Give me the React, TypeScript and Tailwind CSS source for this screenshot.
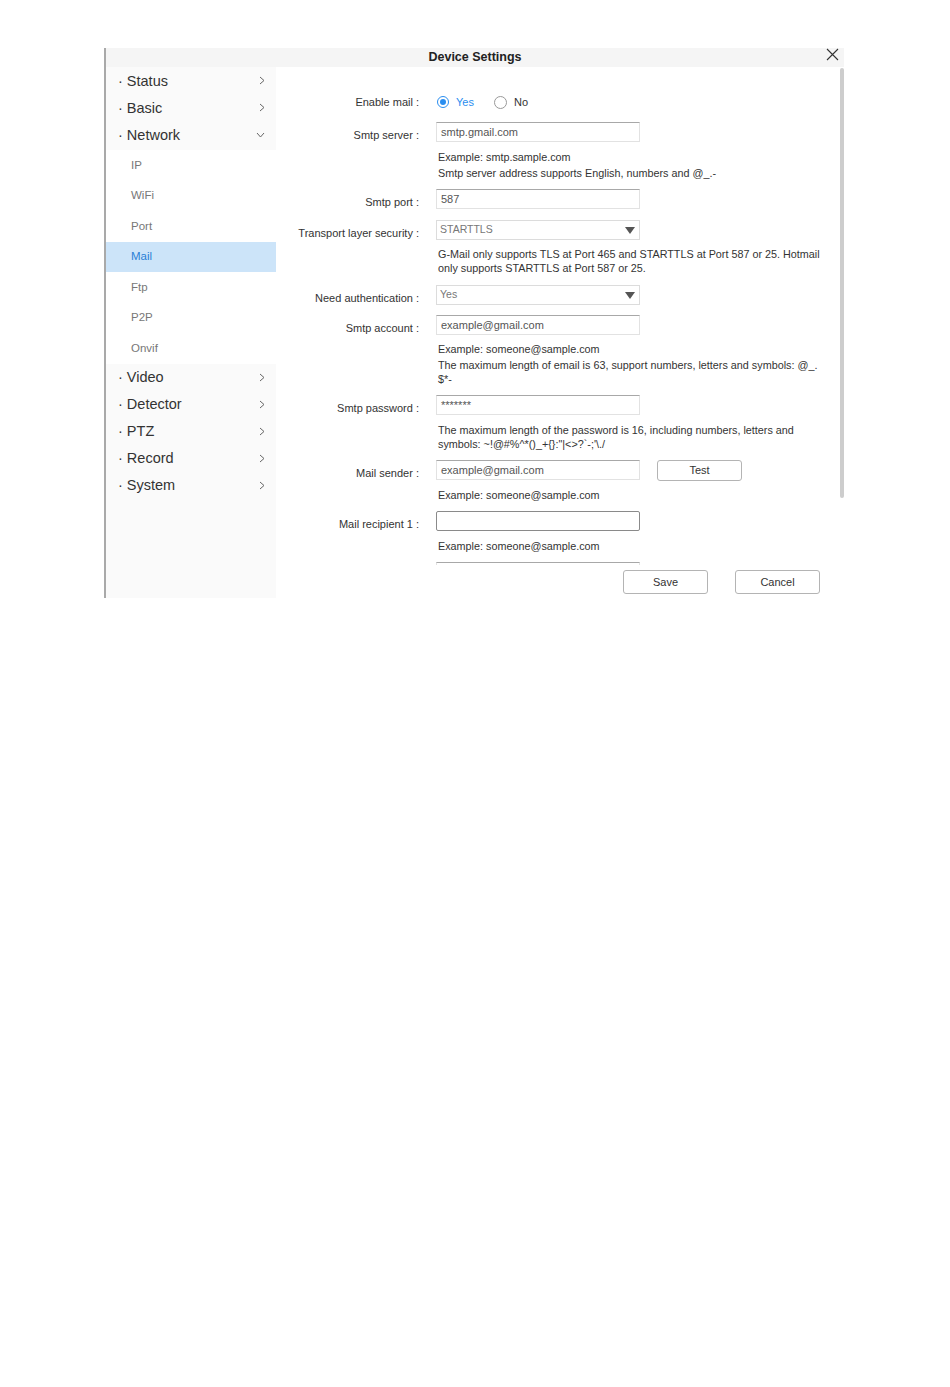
import type { ReactNode } from "react";

const TOP_MENU = ["Status", "Basic", "Network"];
const SUB_MENU = ["IP", "WiFi", "Port", "Mail", "Ftp", "P2P", "Onvif"];
const BOTTOM_MENU = ["Video", "Detector", "PTZ", "Record", "System"];

const ChevronRight = () => (
  <svg width="6" height="9" viewBox="0 0 6 9" className="shrink-0">
    <polyline points="1,1 5,4.5 1,8" fill="none" stroke="#666" strokeWidth="1" />
  </svg>
);

const ChevronDown = () => (
  <svg width="9" height="6" viewBox="0 0 9 6" className="shrink-0">
    <polyline points="1,1 4.5,5 8,1" fill="none" stroke="#666" strokeWidth="1" />
  </svg>
);

const MenuItem = ({ label, open }: { label: string; open?: boolean }) => (
  <div className="flex h-[27px] items-center justify-between pl-[12px] pr-[11px] text-[14.5px] text-[#333]">
    <span className="pt-[2px]">· {label}</span>
    {open ? <ChevronDown /> : <ChevronRight />}
  </div>
);

const SubItem = ({ label, active }: { label: string; active?: boolean }) => (
  <div
    className={
      active
        ? "flex h-[30.5px] items-center bg-[#cce4f9] pl-[25px] text-[11.5px] text-[#2a7fd6]"
        : "flex h-[30.5px] items-center bg-white pl-[25px] text-[11.5px] text-[#777]"
    }
  >
    {label}
  </div>
);

const Row = ({
  label,
  children,
  className = "",
  labelPad = "pt-[6px]",
}: {
  label: string;
  children: ReactNode;
  className?: string;
  labelPad?: string;
}) => (
  <div className={`flex h-[20px] items-center ${className}`}>
    <span className={`w-[143px] text-right text-[11px] leading-[13px] text-[#333] ${labelPad}`}>{label}</span>
    <div className="ml-[17px] flex items-center">{children}</div>
  </div>
);

const TextBox = ({ value, dark }: { value?: string; dark?: boolean }) => (
  <div
    className={
      dark
        ? "flex h-[20px] w-[204px] items-center rounded-[2px] border border-[#8a8a8a] pl-[4px] text-[11px] text-[#555]"
        : "flex h-[20px] w-[204px] items-center border border-[#e2e2e2] border-t-[#a8a8a8] pl-[4px] text-[11px] text-[#555]"
    }
  >
    {value}
  </div>
);

const Select = ({ value }: { value: string }) => (
  <div className="flex h-[20px] w-[204px] items-center justify-between border border-[#dcdcdc] pl-[3px] pr-[4px] text-[10.5px] text-[#777]">
    <span>{value}</span>
    <svg width="10" height="7" viewBox="0 0 10 7">
      <polygon points="0,0 10,0 5,7" fill="#555" />
    </svg>
  </div>
);

const Help = ({ lines, className = "" }: { lines: string[]; className?: string }) => (
  <div className={`ml-[162px] whitespace-nowrap text-[10.8px] leading-[14px] text-[#333] ${className}`}>
    {lines.map((l) => (
      <div key={l}>{l}</div>
    ))}
  </div>
);

const Radio = ({ checked, label }: { checked?: boolean; label: string }) => (
  <div className="flex items-center">
    <span
      className={
        checked
          ? "flex h-[12px] w-[12px] items-center justify-center rounded-full border border-[#2a8ef0]"
          : "h-[13px] w-[13px] rounded-full border border-[#999]"
      }
    >
      {checked && <span className="h-[6px] w-[6px] rounded-full bg-[#2a8ef0]" />}
    </span>
    <span className={checked ? "ml-[7px] text-[11px] text-[#2a8ef0]" : "ml-[7px] text-[11px] text-[#333]"}>{label}</span>
  </div>
);

const Button = ({ label, className = "" }: { label: string; className?: string }) => (
  <div
    className={`flex w-[85px] items-center justify-center rounded-[3px] border border-[#b4b4b4] bg-white text-[11px] text-[#333] ${className}`}
  >
    {label}
  </div>
);

export default function App() {
  return (
    <div className="min-h-[1387px] bg-white pl-[104px] pt-[48px] font-['Liberation_Sans',Arial,sans-serif]">
      <div className="flex h-[550px] w-[740px] flex-col border-l-2 border-[#a9a9a9]">
        {/* Header */}
        <div className="grid h-[19px] shrink-0 grid-cols-[1fr_auto_1fr] bg-[#f5f5f5]">
          <div />
          <div className="flex items-center text-[12.5px] font-bold text-[#222]">Device Settings</div>
          <div className="flex justify-end pr-[5px]">
            <svg width="13" height="13" viewBox="0 0 13 13">
              <path d="M1 1 L12 12 M12 1 L1 12" stroke="#333" strokeWidth="1.1" />
            </svg>
          </div>
        </div>

        <div className="flex flex-1">
          {/* Sidebar */}
          <div className="flex w-[170px] shrink-0 flex-col bg-[#fafafa]">
            {TOP_MENU.map((m) => (
              <MenuItem key={m} label={m} open={m === "Network"} />
            ))}
            <div className="mt-[2px]">
              {SUB_MENU.map((s) => (
                <SubItem key={s} label={s} active={s === "Mail"} />
              ))}
            </div>
            {BOTTOM_MENU.map((m) => (
              <MenuItem key={m} label={m} />
            ))}
          </div>

          {/* Main */}
          <div className="flex flex-1 flex-col bg-white">
            <div className="flex h-[498px] shrink-0">
              <div className="flex-1 overflow-hidden pt-[25px]">
                <Row label="Enable mail :" labelPad="pt-[1px]">
                  <div className="flex h-[20px] items-center gap-[20px] pl-[1px]">
                    <Radio checked label="Yes" />
                    <Radio label="No" />
                  </div>
                </Row>
                <Row label="Smtp server :" className="mt-[10px]">
                  <TextBox value="smtp.gmail.com" />
                </Row>
                <Help className="mt-[8px]" lines={["Example: smtp.sample.com"]} />
                <Help
                  className="mt-[2px]"
                  lines={["Smtp server address supports English, numbers and @_.-"]}
                />
                <Row label="Smtp port :" className="mt-[9px]">
                  <TextBox value="587" />
                </Row>
                <Row label="Transport layer security :" className="mt-[11px]">
                  <Select value="STARTTLS" />
                </Row>
                <Help
                  className="mt-[7px]"
                  lines={[
                    "G-Mail only supports TLS at Port 465 and STARTTLS at Port 587 or 25. Hotmail",
                    "only supports STARTTLS at Port 587 or 25.",
                  ]}
                />
                <Row label="Need authentication :" className="mt-[10px]">
                  <Select value="Yes" />
                </Row>
                <Row label="Smtp account :" className="mt-[10px]">
                  <TextBox value="example@gmail.com" />
                </Row>
                <Help className="mt-[7px]" lines={["Example: someone@sample.com"]} />
                <Help
                  className="mt-[2px]"
                  lines={[
                    "The maximum length of email is 63, support numbers, letters and symbols: @_.",
                    "$*-",
                  ]}
                />
                <Row label="Smtp password :" className="mt-[9px]">
                  <TextBox value="*******" />
                </Row>
                <Help
                  className="mt-[8px]"
                  lines={[
                    "The maximum length of the password is 16, including numbers, letters and",
                    "symbols: ~!@#%^*()_+{}:\"|<>?`-;'\\./",
                  ]}
                />
                <Row label="Mail sender :" className="mt-[9px]">
                  <TextBox value="example@gmail.com" />
                  <Button label="Test" className="ml-[17px] h-[21px]" />
                </Row>
                <Help className="mt-[8px]" lines={["Example: someone@sample.com"]} />
                <Row label="Mail recipient 1 :" className="mt-[9px]">
                  <TextBox dark />
                </Row>
                <Help className="mt-[8px]" lines={["Example: someone@sample.com"]} />
                <Row label="" className="mt-[9px]">
                  <TextBox />
                </Row>
              </div>
              <div className="w-[4px] shrink-0">
                <div className="mt-[1px] h-[430px] rounded-full bg-[#cdcdcd]" />
              </div>
            </div>

            {/* Footer */}
            <div className="flex flex-1 items-start justify-end gap-[27px] pr-[24px] pt-[5px]">
              <Button label="Save" className="h-[24px]" />
              <Button label="Cancel" className="h-[24px]" />
            </div>
          </div>
        </div>
      </div>
    </div>
  );
}
